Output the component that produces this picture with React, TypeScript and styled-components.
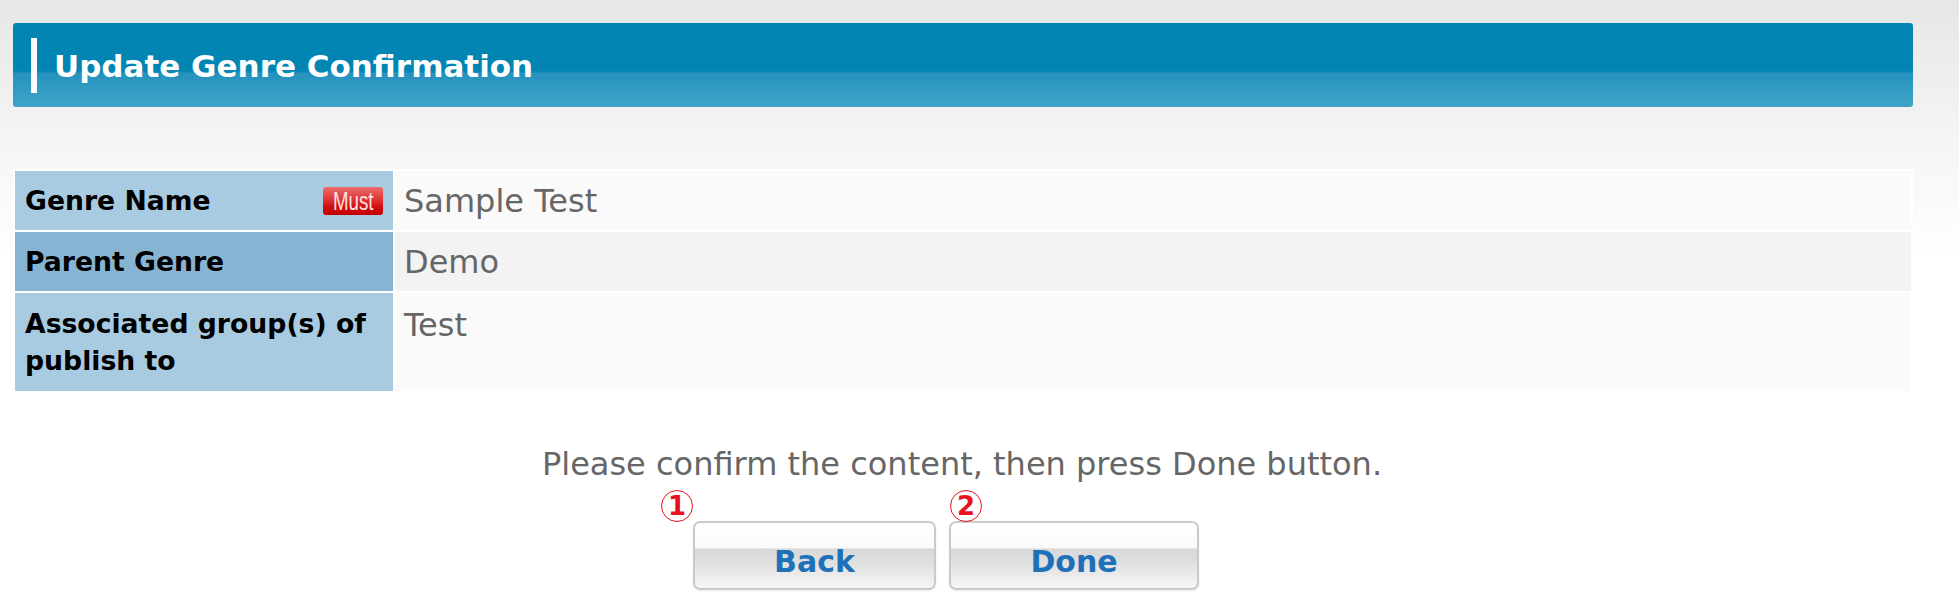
import React from "react";
import styled, { createGlobalStyle } from "styled-components";

const GlobalStyle = createGlobalStyle`
  html, body {
    margin: 0;
    padding: 0;
  }
  body {
    min-height: 100vh;
    background-color: #ffffff;
    background-image: linear-gradient(to bottom, #e6e6e6 0px, #f5f5f5 140px, #ffffff 260px);
    background-repeat: no-repeat;
    font-family: "DejaVu Sans", Verdana, sans-serif;
  }
`;

const Page = styled.div`
  width: 1900px;
  padding: 23px 0 0 13px;
  box-sizing: content-box;
`;

const Header = styled.div`
  height: 84px;
  border-radius: 3px;
  background: linear-gradient(
    to bottom,
    #0285b3 0%,
    #0285b3 57%,
    #2692bd 60%,
    #40a4c8 100%
  );
  display: flex;
  align-items: center;
  padding-left: 18px;
  gap: 17px;
  box-sizing: border-box;
`;

const HeaderBar = styled.span`
  width: 6px;
  height: 55px;
  background: #ffffff;
  flex: none;
`;

const Title = styled.h1`
  margin: 0;
  color: #ffffff;
  font-family: "DejaVu Sans", Verdana, sans-serif;
  font-weight: bold;
  font-size: 31px;
  line-height: 1;
  padding-top: 2px;
`;

const Table = styled.div`
  margin: 62px 0 0 0;
  background: #ffffff;
  padding: 2px;
  display: flex;
  flex-direction: column;
  gap: 2px;
`;

const Row = styled.div<{ $h: number; $top?: boolean }>`
  display: grid;
  grid-template-columns: 378px 1fr;
  gap: 2px;
  height: ${(p) => p.$h}px;
  align-items: stretch;
  & > * {
    align-items: ${(p) => (p.$top ? "flex-start" : "center")};
    padding-top: ${(p) => (p.$top ? "12px" : "0")};
  }
`;

const Label = styled.div<{ $dark?: boolean }>`
  background: ${(p) => (p.$dark ? "#88b4d3" : "#a9cbe1")};
  display: flex;
  justify-content: space-between;
  padding-left: 10px;
  padding-right: 10px;
  box-sizing: border-box;
  color: #000000;
  font-family: "DejaVu Sans", Verdana, sans-serif;
  font-weight: bold;
  font-size: 26.67px;
  line-height: 37.33px;
`;

const Value = styled.div<{ $dark?: boolean }>`
  background: ${(p) => (p.$dark ? "#f3f3f3" : "#fafafa")};
  display: flex;
  padding-left: 9px;
  box-sizing: border-box;
  color: #666666;
  font-family: "DejaVu Sans", Verdana, sans-serif;
  font-size: 32px;
  line-height: 40px;
`;

const MustBadge = styled.span`
  flex: none;
  width: 60px;
  height: 28px;
  border-radius: 3px;
  background: linear-gradient(to bottom, #ea7070 0%, #e03a3a 40%, #cf0a0a 75%, #c40000 100%);
  display: flex;
  align-items: center;
  justify-content: center;
  align-self: center;
  overflow: hidden;
`;

const MustText = styled.span`
  display: inline-block;
  color: #fde0e0;
  font-family: "Liberation Sans", Arial, sans-serif;
  font-weight: normal;
  font-size: 26px;
  line-height: 1;
  transform: scaleX(0.72);
  padding-top: 1px;
`;

const Message = styled.p`
  margin: 51px 0 0 0;
  padding-right: 2px;
  text-align: center;
  color: #666666;
  font-family: "DejaVu Sans", Verdana, sans-serif;
  font-size: 32px;
  line-height: 40px;
`;

const ButtonRow = styled.div`
  margin-top: 37px;
  display: flex;
  justify-content: center;
  gap: 13px;
  padding-right: 34px;
`;

const ButtonWrap = styled.div`
  position: relative;
`;

const Marker = styled.span<{ $side: "left" | "top" }>`
  position: absolute;
  bottom: 100%;
  margin-bottom: -1px;
  ${(p) => (p.$side === "left" ? "right: 100%;" : "left: 1px;")}
  width: 30px;
  height: 30px;
  border: 1.5px solid #e8121e;
  border-radius: 50%;
  color: #e8121e;
  display: flex;
  align-items: center;
  justify-content: center;
  font-family: "DejaVu Sans", Verdana, sans-serif;
  font-weight: bold;
  font-size: 26px;
  line-height: 1;
`;

const Button = styled.button<{ $w: number }>`
  width: ${(p) => p.$w}px;
  height: 69px;
  border: 2px solid #cacaca;
  border-radius: 7px;
  background: linear-gradient(
    to bottom,
    #ffffff 0%,
    #fafafa 38%,
    #d8d8d8 40%,
    #dedede 60%,
    #f2f2f2 92%,
    #f6f6f6 100%
  );
  box-shadow: 0 1px 2px rgba(0, 0, 0, 0.08);
  color: #1e71b8;
  font-family: "DejaVu Sans", Verdana, sans-serif;
  font-weight: bold;
  font-size: 30px;
  line-height: 1;
  padding: 12px 0 0 0;
  cursor: pointer;
  box-sizing: border-box;
`;

export default function App() {
  return (
    <>
      <GlobalStyle />
      <Page>
        <Header>
          <HeaderBar />
          <Title>Update Genre Confirmation</Title>
        </Header>
        <Table>
          <Row $h={59}>
            <Label>
              <span>Genre Name</span>
              <MustBadge>
                <MustText>Must</MustText>
              </MustBadge>
            </Label>
            <Value>Sample Test</Value>
          </Row>
          <Row $h={59}>
            <Label $dark>Parent Genre</Label>
            <Value $dark>Demo</Value>
          </Row>
          <Row $h={98} $top>
            <Label>
              Associated group(s) of
              <br />
              publish to
            </Label>
            <Value>Test</Value>
          </Row>
        </Table>
        <Message>Please confirm the content, then press Done button.</Message>
        <ButtonRow>
          <ButtonWrap>
            <Marker $side="left">1</Marker>
            <Button $w={243}>Back</Button>
          </ButtonWrap>
          <ButtonWrap>
            <Marker $side="top">2</Marker>
            <Button $w={250}>Done</Button>
          </ButtonWrap>
        </ButtonRow>
      </Page>
    </>
  );
}
